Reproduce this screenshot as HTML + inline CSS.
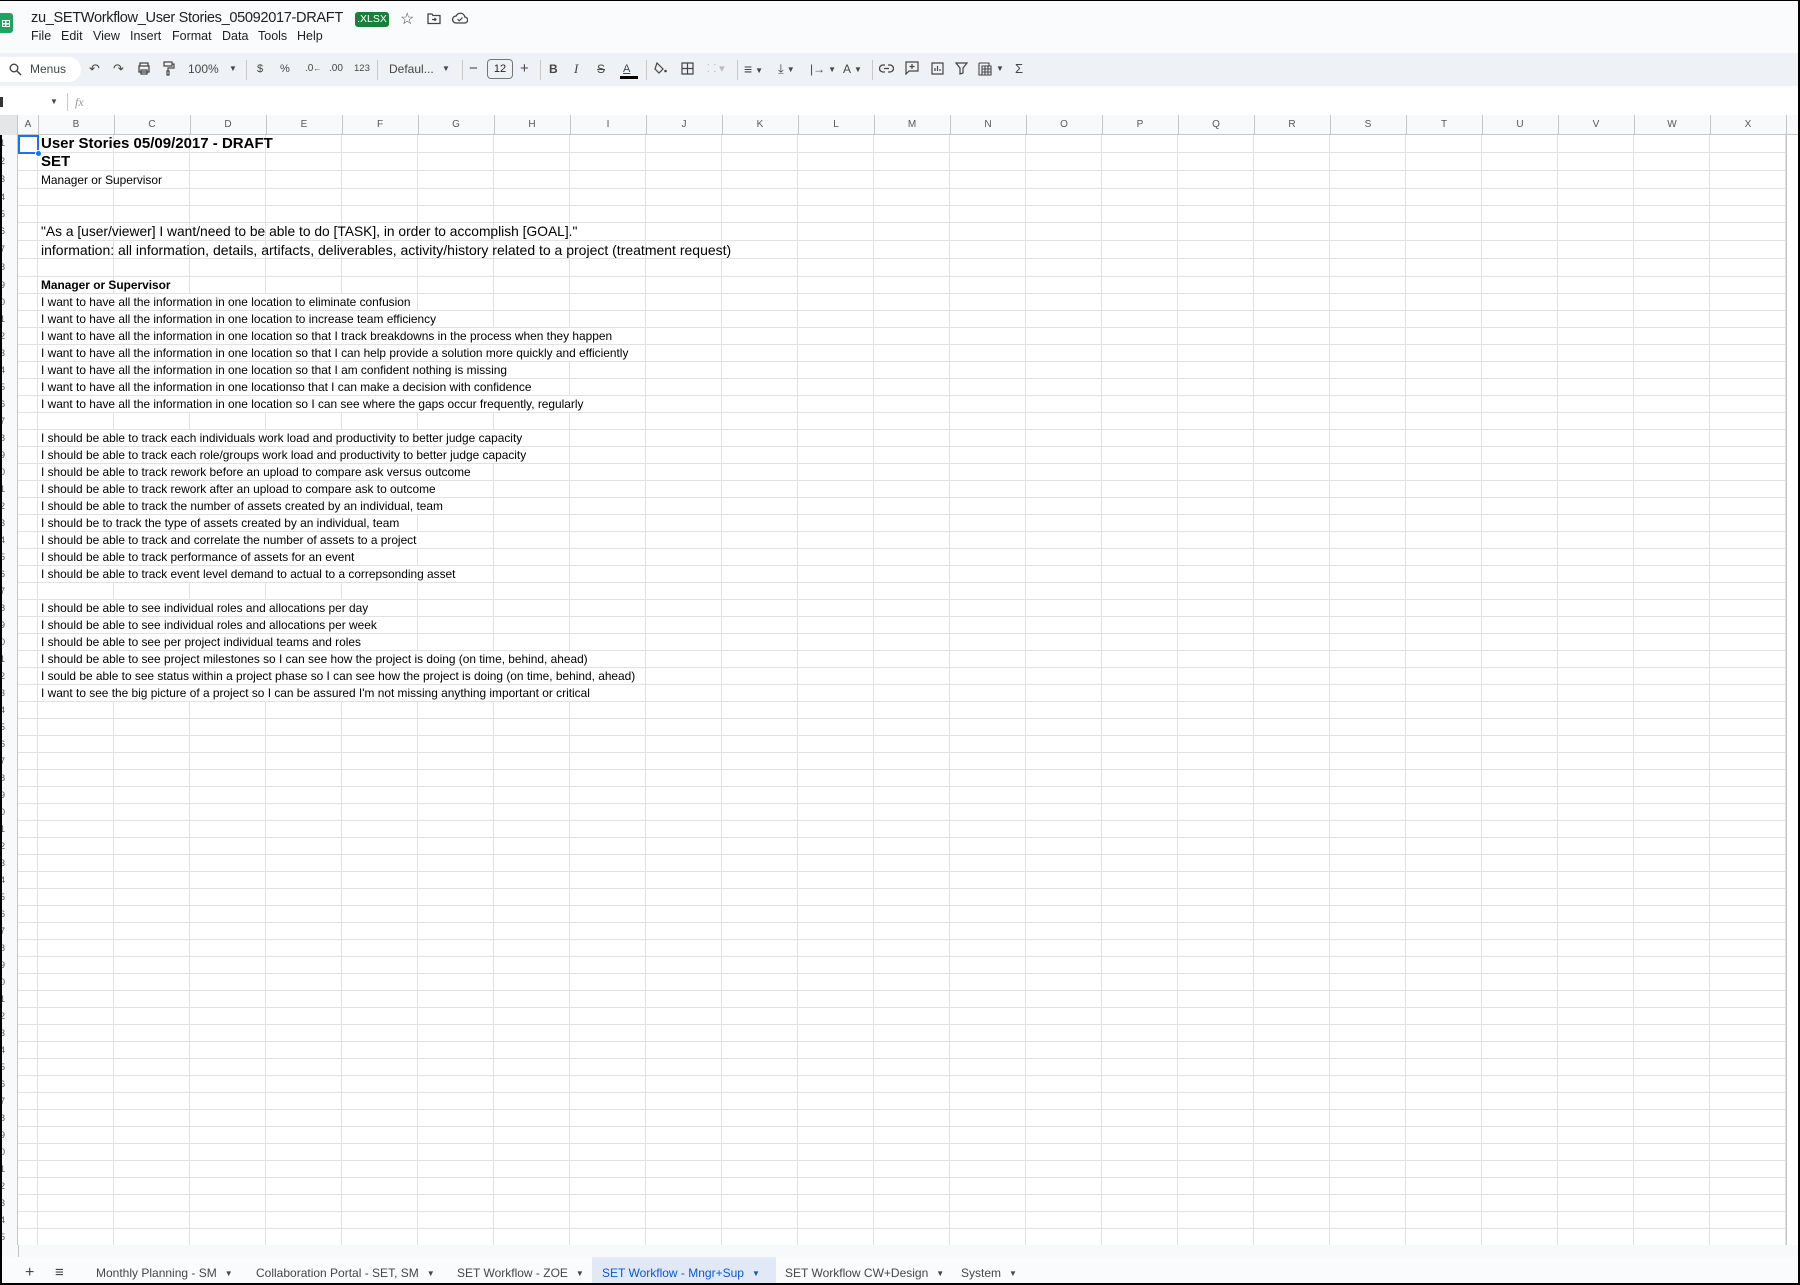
<!DOCTYPE html>
<html><head><meta charset="utf-8">
<style>
*{margin:0;padding:0;box-sizing:border-box}
body{width:1800px;height:1285px;overflow:hidden;background:#fff;font-family:"Liberation Sans",Arial,sans-serif;position:relative;color:#444746}
.a{position:absolute;white-space:nowrap}
.top{left:0;top:0;width:1800px;height:114px;background:#f9fbfd}
.tb{left:0;top:53px;width:1800px;height:33px;background:#eef2f7}
.ic{position:absolute;top:60px;height:18px;font-size:13px;color:#444746;line-height:18px}
.sep{position:absolute;top:60px;width:1px;height:20px;background:#c7c7c7}
.menu{top:29px;font-size:12.5px;color:#1f1f1f}
.colh{left:0;top:115px;width:1800px;height:20px;background:#f8f9fa;border-bottom:1px solid #c4c7c5}
.ch{position:absolute;top:115px;height:20px;line-height:20px;font-size:10px;color:#575757;text-align:center;width:76px}
.cell{position:absolute;left:41px;font-size:11.9px;color:#000;line-height:17px;font-family:"Liberation Sans",Arial,sans-serif}
.tab{position:absolute;top:1264px;font-size:12px;color:#444746;line-height:18px}
.car{font-size:8px;margin-left:8px;vertical-align:1px}
</style></head><body>
<div class="a top"></div>
<div class="a tb"></div>
<!-- logo -->
<div class="a" style="left:0;top:13px;width:13px;height:20px;background:#1ea362;border-radius:0 3px 3px 0"></div>
<div class="a" style="left:2px;top:20px;width:8px;height:7px;border:1.5px solid #fff;background:linear-gradient(#fff,#fff) center/100% 1.5px no-repeat,linear-gradient(#fff,#fff) center/1.5px 100% no-repeat"></div>
<div class="a" style="left:31px;top:10px;font-size:14.6px;letter-spacing:-0.35px;color:#1f1f1f">zu_SETWorkflow_User Stories_05092017-DRAFT</div>
<div class="a" style="left:355px;top:12px;width:34px;height:15px;background:#188038;color:#fff;border-radius:3px;font-size:10.5px;line-height:15px;text-align:center">.XLSX</div>
<div class="a" style="left:400px;top:9px;font-size:16px;color:#444">☆</div>
<svg class="a" style="left:427px;top:12px" width="14" height="13" viewBox="0 0 14 13"><path d="M1 2h4l1 1.5h7v8H1z" fill="none" stroke="#444" stroke-width="1.3"/><path d="M5 7.5h4M7.5 6l1.5 1.5L7.5 9" fill="none" stroke="#444" stroke-width="1.2"/></svg>
<svg class="a" style="left:452px;top:12px" width="16" height="12" viewBox="0 0 16 12"><path d="M4 11h8.5a3 3 0 0 0 .3-6A4.5 4.5 0 0 0 4.2 4 3.5 3.5 0 0 0 4 11z" fill="none" stroke="#444" stroke-width="1.3"/><path d="M5.5 7l1.8 1.8L10.5 5.5" fill="none" stroke="#444" stroke-width="1.2"/></svg>
<div class="a menu" style="left:31px">File</div>
<div class="a menu" style="left:61px">Edit</div>
<div class="a menu" style="left:93px">View</div>
<div class="a menu" style="left:130px">Insert</div>
<div class="a menu" style="left:172px">Format</div>
<div class="a menu" style="left:222px">Data</div>
<div class="a menu" style="left:258px">Tools</div>
<div class="a menu" style="left:297px">Help</div>
<!-- toolbar -->
<div class="a" style="left:0;top:57px;width:81px;height:25px;background:#fff;border-radius:0 13px 13px 0"></div>
<svg class="a" style="left:9px;top:63px" width="13" height="13" viewBox="0 0 13 13"><circle cx="5" cy="5" r="3.8" fill="none" stroke="#444" stroke-width="1.4"/><path d="M8 8l4 4" stroke="#444" stroke-width="1.5"/></svg>
<div class="ic" style="left:30px;font-size:12px">Menus</div>
<div class="ic" style="left:89px">↶</div>
<div class="ic" style="left:113px">↷</div>
<svg class="a" style="left:137px;top:62px" width="14" height="13" viewBox="0 0 14 13"><path d="M3 4V1h8v3M2 4h10v6H2zM4 8h6v4H4z" fill="none" stroke="#444" stroke-width="1.3"/></svg>
<svg class="a" style="left:163px;top:61px" width="12" height="15" viewBox="0 0 12 15"><path d="M1 1h8v4H1zM9 3h2v4H5v3M4 10h2v4H4z" fill="none" stroke="#444" stroke-width="1.2"/></svg>
<div class="ic" style="left:188px;font-size:12px">100%</div>
<div class="ic" style="left:229px;font-size:8px">▼</div>
<div class="sep" style="left:246px"></div>
<div class="ic" style="left:257px;font-size:11px">$</div>
<div class="ic" style="left:280px;font-size:11px">%</div>
<div class="ic" style="left:305px;font-size:10px">.0<span style="font-size:8px">←</span></div>
<div class="ic" style="left:329px;font-size:10px">.00</div>
<div class="ic" style="left:354px;font-size:9.5px">123</div>
<div class="sep" style="left:377px"></div>
<div class="ic" style="left:389px;font-size:12px">Defaul...</div>
<div class="ic" style="left:442px;font-size:8px">▼</div>
<div class="sep" style="left:462px"></div>
<div class="ic" style="left:469px;font-size:15px">−</div>
<div class="a" style="left:487px;top:59px;width:26px;height:20px;border:1px solid #747775;border-radius:4px;font-size:11px;line-height:18px;text-align:center;color:#1f1f1f">12</div>
<div class="ic" style="left:520px;font-size:15px">+</div>
<div class="sep" style="left:540px"></div>
<div class="ic" style="left:549px;font-weight:bold;font-size:12px">B</div>
<div class="ic" style="left:574px;font-style:italic;font-size:13px;font-family:'Liberation Serif',serif">I</div>
<div class="ic" style="left:597px;text-decoration:line-through;font-size:12px">S</div>
<div class="ic" style="left:623px;font-size:11px;text-decoration:underline">A</div>
<div class="a" style="left:620px;top:76px;width:18px;height:3px;background:#000"></div>
<div class="sep" style="left:646px"></div>
<svg class="a" style="left:654px;top:61px" width="14" height="15" viewBox="0 0 14 15"><path d="M3 2l6 6-4 4-4-4z" fill="none" stroke="#444" stroke-width="1.2"/><circle cx="11.5" cy="10" r="1.3" fill="#444"/></svg>
<svg class="a" style="left:681px;top:62px" width="13" height="13" viewBox="0 0 13 13"><path d="M1 1h11v11H1zM6.5 1v11M1 6.5h11" fill="none" stroke="#444" stroke-width="1.2"/></svg>
<div class="ic" style="left:707px;color:#bbb;font-size:11px">⸬ ▾</div>
<div class="sep" style="left:737px"></div>
<div class="ic" style="left:744px;font-size:14px">≡<span class="car" style="margin-left:3px">▼</span></div>
<div class="ic" style="left:778px;font-size:13px">⤓<span class="car" style="margin-left:3px">▼</span></div>
<div class="ic" style="left:810px;font-size:12px">|→<span class="car" style="margin-left:3px">▼</span></div>
<div class="ic" style="left:843px;font-size:12px">A<span class="car" style="margin-left:3px">▼</span></div>
<div class="sep" style="left:872px"></div>
<svg class="a" style="left:879px;top:63px" width="15" height="11" viewBox="0 0 15 11"><path d="M6 2H4a3.5 3.5 0 0 0 0 7h2M9 2h2a3.5 3.5 0 0 1 0 7H9M5 5.5h5" fill="none" stroke="#444" stroke-width="1.3"/></svg>
<svg class="a" style="left:905px;top:61px" width="14" height="14" viewBox="0 0 14 14"><path d="M1 1h12v9H4l-3 3z" fill="none" stroke="#444" stroke-width="1.2"/><path d="M7 3v5M4.5 5.5h5" stroke="#444" stroke-width="1.2"/></svg>
<svg class="a" style="left:931px;top:62px" width="13" height="13" viewBox="0 0 13 13"><path d="M1 1h11v11H1zM4 9V6M6.5 9V4M9 9V7" fill="none" stroke="#444" stroke-width="1.2"/></svg>
<svg class="a" style="left:955px;top:62px" width="13" height="13" viewBox="0 0 13 13"><path d="M1 1h11L8 6v5L5 12V6z" fill="none" stroke="#444" stroke-width="1.2"/></svg>
<svg class="a" style="left:978px;top:62px" width="14" height="14" viewBox="0 0 14 14"><path d="M1 1h10v3M1 1v12h3M4 4h9v9H4zM4 7h9M4 10h9M7 4v9M10 4v9" fill="none" stroke="#444" stroke-width="1.1"/></svg>
<div class="ic" style="left:996px;font-size:8px">▼</div>
<div class="ic" style="left:1015px;font-size:13px">Σ</div>
<!-- formula bar -->
<div class="a" style="left:0;top:88px;width:1800px;height:26px;background:#fff"></div>
<div class="a" style="left:0;top:97px;width:3px;height:10px;background:#333"></div>
<div class="a" style="left:50px;top:97px;font-size:8px;color:#444">▼</div>
<div class="a" style="left:67px;top:93px;width:1px;height:18px;background:#c7c7c7"></div>
<div class="a" style="left:75px;top:95px;font-size:12px;color:#999;font-style:italic;font-family:'Liberation Serif',serif">fx</div>
<!-- column headers -->
<div class="a colh"></div>
<div class="a" style="left:0;top:115px;width:18px;height:20px;background:#e4e6e8;border-right:1px solid #c4c7c5"></div>
<div class="ch" style="left:18px;width:20px">A</div>
<div id="chs"></div>
<!-- grid -->
<div class="a" style="left:18px;top:135px;width:1769px;height:1110px;
background:
linear-gradient(#e2e2e2,#e2e2e2) 19px 0/1px 100% no-repeat,
repeating-linear-gradient(90deg,#e2e2e2 0 1px,transparent 1px 76px) 19px 0/100% 100% no-repeat"></div>
<div id="rows"></div>
<div class="a" style="left:0;top:135px;width:18px;height:1110px;border-right:1px solid #c4c7c5;background:#f8f9fa;overflow:hidden" id="rh"></div>
<div class="a" style="left:1786px;top:115px;width:1px;height:1130px;background:#c4c7c5"></div>
<!-- selection -->
<div class="a" style="left:18px;top:135px;width:21px;height:19px;border:2px solid #1a73e8"></div>
<div class="a" style="left:35px;top:150px;width:7px;height:7px;border-radius:50%;background:#1a73e8;border:1px solid #fff"></div>
<div id="txt"></div>
<!-- bottom -->
<div class="a" style="left:0;top:1245px;width:1800px;height:12px;background:#f8f9fa"></div>
<div class="a" style="left:18px;top:1245px;width:1px;height:12px;background:#c4c7c5"></div>
<div class="a" style="left:0;top:1257px;width:1800px;height:28px;background:#f9fbfd"></div>
<div class="a" style="left:592px;top:1257px;width:184px;height:26px;background:#e1e9f7"></div>
<div class="tab" style="left:25px;font-size:16px">+</div>
<div class="tab" style="left:55px;font-size:15px">≡</div>
<div class="tab" style="left:96px">Monthly Planning - SM<span class="car">▼</span></div>
<div class="tab" style="left:256px">Collaboration Portal - SET, SM<span class="car">▼</span></div>
<div class="tab" style="left:457px">SET Workflow - ZOE<span class="car">▼</span></div>
<div class="tab" style="left:602px;color:#0b57d0">SET Workflow - Mngr+Sup<span class="car">▼</span></div>
<div class="tab" style="left:785px">SET Workflow CW+Design<span class="car">▼</span></div>
<div class="tab" style="left:961px">System<span class="car">▼</span></div>
<!-- black frame -->
<div class="a" style="left:0;top:0;width:1800px;height:1px;background:#000"></div>
<div class="a" style="left:1798px;top:0;width:2px;height:1285px;background:#000"></div>
<div class="a" style="left:0;top:1283px;width:1800px;height:2px;background:#000"></div>
<div class="a" style="left:0;top:135px;width:2px;height:1150px;background:#000"></div>
<script>
var L="ABCDEFGHIJKLMNOPQRSTUVWX",h="";
for(var i=1;i<24;i++){var x=38+(i-1)*76;h+='<div class="ch" style="left:'+x+'px">'+L[i]+'</div><div class="a" style="left:'+x+'px;top:115px;width:1px;height:20px;background:#c4c7c5"></div>';}
document.getElementById('chs').innerHTML=h;
var hs=[18,18,18,17,17,18,18,18,17],tops=[],y=135;
for(var r=1;r<=66;r++){tops[r]=y;y+=(r<=9?hs[r-1]:17);if(y>1245)break;}
var rw="",rh="";
for(var r=1;r<tops.length;r++){var t=tops[r];
rw+='<div class="a" style="left:18px;top:'+(t+(r<=9?hs[r-1]:17)-1)+'px;width:1769px;height:1px;background:#e2e2e2"></div>';
rh+='<div class="a" style="right:12px;top:'+(t-135)+'px;font-size:9px;line-height:17px;color:#555">'+r+'</div>';}
document.getElementById('rows').innerHTML=rw;
document.getElementById('rh').innerHTML=rh;
var T={10:"I want to have all the information in one location to eliminate confusion",
11:"I want to have all the information in one location to increase team efficiency",
12:"I want to have all the information in one location so that I track breakdowns in the process when they happen",
13:"I want to have all the information in one location so that I can help provide a solution more quickly and efficiently",
14:"I want to have all the information in one location so that I am confident nothing is missing",
15:"I want to have all the information in one locationso that I can make a decision with confidence",
16:"I want to have all the information in one location so I can see where the gaps occur frequently, regularly",
18:"I should be able to track each individuals work load and productivity to better judge capacity",
19:"I should be able to track each role/groups work load and productivity to better judge capacity",
20:"I should be able to track rework before an upload to compare ask versus outcome",
21:"I should be able to track rework after an upload to compare ask to outcome",
22:"I should be able to track the number of assets created by an individual, team",
23:"I should be to track the type of assets created by an individual, team",
24:"I should be able to track and correlate the number of assets to a project",
25:"I should be able to track performance of assets for an event",
26:"I should be able to track event level demand to actual to a correpsonding asset",
28:"I should be able to see individual roles and allocations per day",
29:"I should be able to see individual roles and allocations per week",
30:"I should be able to see per project individual teams and roles",
31:"I should be able to see project milestones so I can see how the project is doing (on time, behind, ahead)",
32:"I sould be able to see status within a project phase so I can see how the project is doing (on time, behind, ahead)",
33:"I want to see the big picture of a project so I can be assured I'm not missing anything important or critical"};
var tx='<div class="cell" style="top:'+tops[1]+'px;font-size:15px;font-weight:bold;line-height:18px">User Stories 05/09/2017 - DRAFT</div>'+
'<div class="cell" style="top:'+tops[2]+'px;font-size:15px;font-weight:bold;line-height:18px">SET</div>'+
'<div class="cell" style="top:'+(tops[3]+1)+'px">Manager or Supervisor</div>'+
'<div class="cell" style="top:'+tops[6]+'px;font-size:13.8px;line-height:18px">"As a [user/viewer] I want/need to be able to do [TASK], in order to accomplish [GOAL]."</div>'+
'<div class="cell" style="top:'+tops[7]+'px;font-size:14px;line-height:18px">information: all information, details, artifacts, deliverables, activity/history related to a project (treatment request)</div>'+
'<div class="cell" style="top:'+tops[9]+'px;font-weight:bold">Manager or Supervisor</div>';
for(var k in T){tx+='<div class="cell" style="top:'+tops[k]+'px;background:#fff;padding-right:2px;height:16px">'+T[k]+'</div>';}
document.getElementById('txt').innerHTML=tx;
</script>
</body></html>
